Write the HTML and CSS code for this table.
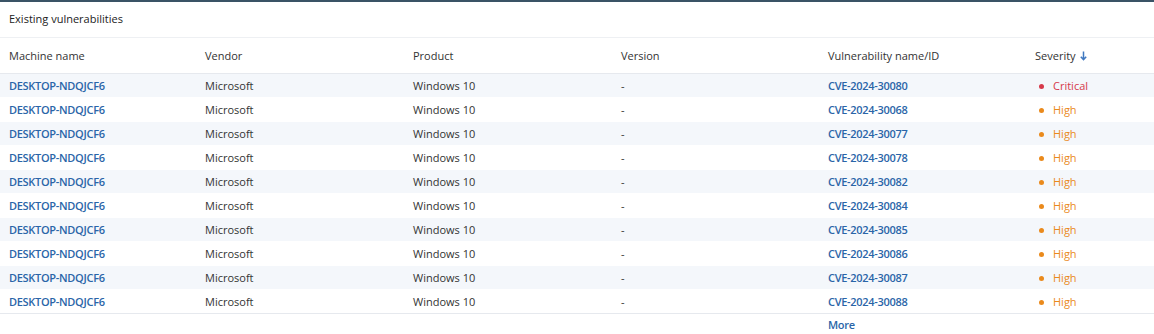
FILE: index.html
```html
<!DOCTYPE html>
<html lang="en">
<head>
    <meta charset="UTF-8">
    <title>Existing vulnerabilities</title>
    <link rel="stylesheet" href="styles.css">
</head>
<body>

<div class="panel">
    <div class="panel-title">Existing vulnerabilities</div>
    <table class="vuln-table">
        <thead>
            <tr>
                <th class="col-machine">Machine name</th>
                <th class="col-vendor">Vendor</th>
                <th class="col-product">Product</th>
                <th class="col-version">Version</th>
                <th class="col-cve">Vulnerability name/ID</th>
                <th class="col-severity">Severity
                    <svg class="sort-arrow" width="7" height="10" viewBox="0 0 7 10">
                        <path d="M3.5 0.5 V8.5 M0.8 5.8 L3.5 8.6 L6.2 5.8" fill="none" stroke="#3f78c0" stroke-width="1.5"/>
                    </svg>
                </th>
            </tr>
        </thead>
        <tbody>
            <tr>
                <td><a class="link" href="#">DESKTOP-NDQJCF6</a></td>
                <td>Microsoft</td>
                <td>Windows 10</td>
                <td>-</td>
                <td><a class="link" href="#">CVE-2024-30080</a></td>
                <td class="sev critical"><span class="dot"></span>Critical</td>
            </tr>
            <tr>
                <td><a class="link" href="#">DESKTOP-NDQJCF6</a></td>
                <td>Microsoft</td>
                <td>Windows 10</td>
                <td>-</td>
                <td><a class="link" href="#">CVE-2024-30068</a></td>
                <td class="sev high"><span class="dot"></span>High</td>
            </tr>
            <tr>
                <td><a class="link" href="#">DESKTOP-NDQJCF6</a></td>
                <td>Microsoft</td>
                <td>Windows 10</td>
                <td>-</td>
                <td><a class="link" href="#">CVE-2024-30077</a></td>
                <td class="sev high"><span class="dot"></span>High</td>
            </tr>
            <tr>
                <td><a class="link" href="#">DESKTOP-NDQJCF6</a></td>
                <td>Microsoft</td>
                <td>Windows 10</td>
                <td>-</td>
                <td><a class="link" href="#">CVE-2024-30078</a></td>
                <td class="sev high"><span class="dot"></span>High</td>
            </tr>
            <tr>
                <td><a class="link" href="#">DESKTOP-NDQJCF6</a></td>
                <td>Microsoft</td>
                <td>Windows 10</td>
                <td>-</td>
                <td><a class="link" href="#">CVE-2024-30082</a></td>
                <td class="sev high"><span class="dot"></span>High</td>
            </tr>
            <tr>
                <td><a class="link" href="#">DESKTOP-NDQJCF6</a></td>
                <td>Microsoft</td>
                <td>Windows 10</td>
                <td>-</td>
                <td><a class="link" href="#">CVE-2024-30084</a></td>
                <td class="sev high"><span class="dot"></span>High</td>
            </tr>
            <tr>
                <td><a class="link" href="#">DESKTOP-NDQJCF6</a></td>
                <td>Microsoft</td>
                <td>Windows 10</td>
                <td>-</td>
                <td><a class="link" href="#">CVE-2024-30085</a></td>
                <td class="sev high"><span class="dot"></span>High</td>
            </tr>
            <tr>
                <td><a class="link" href="#">DESKTOP-NDQJCF6</a></td>
                <td>Microsoft</td>
                <td>Windows 10</td>
                <td>-</td>
                <td><a class="link" href="#">CVE-2024-30086</a></td>
                <td class="sev high"><span class="dot"></span>High</td>
            </tr>
            <tr>
                <td><a class="link" href="#">DESKTOP-NDQJCF6</a></td>
                <td>Microsoft</td>
                <td>Windows 10</td>
                <td>-</td>
                <td><a class="link" href="#">CVE-2024-30087</a></td>
                <td class="sev high"><span class="dot"></span>High</td>
            </tr>
            <tr>
                <td><a class="link" href="#">DESKTOP-NDQJCF6</a></td>
                <td>Microsoft</td>
                <td>Windows 10</td>
                <td>-</td>
                <td><a class="link" href="#">CVE-2024-30088</a></td>
                <td class="sev high"><span class="dot"></span>High</td>
            </tr>
        </tbody>
    </table>
    <div class="more-row"><a class="link more" href="#">More</a></div>
</div>

</body>
</html>
```

FILE: styles.css
```css
body {
    margin: 0;
    padding: 0;
    background-color: #fff;
    font-family: 'Open Sans', sans-serif;
    font-size: 11px;
    color: #333;
}
.panel {
    border-top: 2px solid #3a5366;
}
.panel-title {
    height: 35px;
    line-height: 34px;
    padding-left: 9px;
    color: #222;
    border-bottom: 1px solid #eef0f3;
}
.vuln-table {
    width: 100%;
    border-collapse: collapse;
    table-layout: fixed;
}
.vuln-table th {
    height: 35px;
    text-align: left;
    font-weight: normal;
    color: #333;
    padding: 0 0 0 9px;
    border-bottom: 1px solid #e6e9ee;
    white-space: nowrap;
}
.vuln-table td {
    height: 23px;
    padding: 0 0 0 9px;
    border-bottom: 1px solid #fff;
    white-space: nowrap;
}
.vuln-table tbody tr:nth-child(odd) td {
    background-color: #f4f7fb;
}
.vuln-table tbody tr:last-child td {
    border-bottom: 1px solid #e6e9ee;
}
.col-machine { width: 187px; }
.col-vendor { width: 199px; }
.col-product { width: 199px; }
.col-version { width: 198px; }
.col-cve { width: 198px; }
.link {
    color: #2a65a8;
    font-weight: 600;
    letter-spacing: -0.3px;
    text-decoration: none;
}
.sort-arrow {
    vertical-align: -1px;
    margin-left: 2px;
}
.sev .dot {
    display: inline-block;
    width: 5px;
    height: 5px;
    border-radius: 50%;
    vertical-align: 1px;
    margin: 0 9px 0 4px;
}
.critical { color: #d6394a; }
.critical .dot { background-color: #d6394a; }
.high { color: #ea8a1c; }
.high .dot { background-color: #ea8a1c; }
.more-row {
    padding: 3px 0 0 828px;
}
```
